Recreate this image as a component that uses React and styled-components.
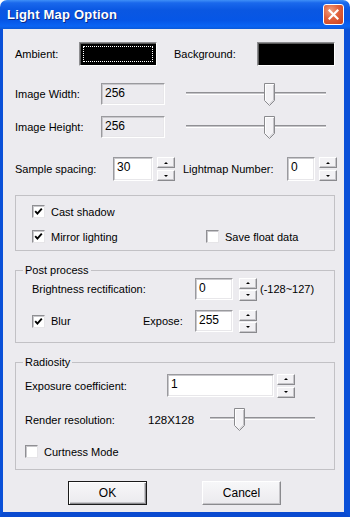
import React from 'react';
import styled, { createGlobalStyle } from 'styled-components';

const GlobalStyle = createGlobalStyle`
  html, body { margin: 0; padding: 0; background: #ffffff; }
  body { font-family: "Liberation Sans", Arial, sans-serif; }
`;

const Window = styled.div`
  width: 350px;
  height: 517px;
  display: flex;
  flex-direction: column;
  font-family: "Liberation Sans", Arial, sans-serif;
  font-size: 11px;
  color: #000;
`;

const TitleBar = styled.div`
  height: 29px;
  flex: none;
  display: flex;
  align-items: center;
  justify-content: space-between;
  padding: 0 6px 0 7px;
  border-radius: 7px 7px 0 0;
  background: linear-gradient(to bottom, #3f8ff7 0%, #1a68ec 10%, #0a57e2 35%, #0656e6 70%, #0a64f4 90%, #0b5ad9 100%);
`;

const Title = styled.div`
  color: #fff;
  font-weight: bold;
  font-size: 13px;
  letter-spacing: 0.2px;
  text-shadow: 1px 1px #0b2a86;
`;

const CloseButton = styled.div`
  width: 19px;
  height: 19px;
  border: 1px solid #fff;
  border-radius: 3px;
  display: flex;
  align-items: center;
  justify-content: center;
  background: radial-gradient(circle at 35% 30%, #f0a080 0%, #e0603c 45%, #c8401e 100%);
`;

const Client = styled.div`
  flex: 1;
  display: flex;
  flex-direction: column;
  padding: 13px 0 0 12px;
  background: #ecebef;
  border-left: 3px solid #0a50d8;
  border-right: 6px solid #0a50d8;
  border-bottom: 5px solid #0a4ad0;
`;

const Row = styled.div`
  display: flex;
  align-items: center;
  height: ${p => p.$h || 22}px;
  margin-top: ${p => p.$mt || 0}px;
`;

const Label = styled.div`
  width: ${p => p.$w}px;
  margin-left: ${p => p.$ml || 0}px;
  flex: none;
  white-space: nowrap;
`;

const ColorBox = styled.div`
  width: 78px;
  height: 24px;
  box-sizing: border-box;
  flex: none;
  background: #000;
  border: 1px solid;
  border-color: #8d8d90 #ffffff #ffffff #8d8d90;
  box-shadow: inset 1px 1px #5a5a5a;
  padding: 3px;
  display: flex;
`;

const FocusRect = styled.div`
  flex: 1;
  border: 1px dotted #ffffff;
`;

const TextBox = styled.div`
  width: ${p => p.$w}px;
  height: ${p => p.$h || 22}px;
  box-sizing: border-box;
  flex: none;
  padding: 2px 0 0 3px;
  background: ${p => (p.$readOnly ? '#ecebef' : '#ffffff')};
  border: 1px solid;
  border-color: #9a9a9e #ffffff #ffffff #9a9a9e;
  box-shadow: inset 1px 1px #c9c8cc, inset -1px -1px #e8e7ea;
  font-size: 12px;
  line-height: 14px;
`;

const SpinWrap = styled.div`
  display: flex;
  flex-direction: column;
  justify-content: space-between;
  width: 18px;
  height: ${p => p.$h || 24}px;
  margin-left: ${p => p.$ml || 4}px;
  flex: none;
`;

const SpinButton = styled.div`
  height: 11px;
  box-sizing: border-box;
  display: flex;
  align-items: center;
  justify-content: center;
  background: #f2f1f4;
  border: 1px solid;
  border-color: #ffffff #8a8a8e #8a8a8e #ffffff;
  box-shadow: inset -1px -1px #c6c5c9;
`;

const Arrow = styled.div`
  width: 0;
  height: 0;
  border-left: 2px solid transparent;
  border-right: 2px solid transparent;
  ${p => (p.$down ? 'border-top: 2px solid #000;' : 'border-bottom: 2px solid #000;')}
`;

const Slider = styled.div`
  position: relative;
  width: ${p => p.$w}px;
  height: ${p => p.$h || 23}px;
  margin-left: ${p => p.$ml || 0}px;
  flex: none;
  padding-top: 9px;
  box-sizing: border-box;
`;

const Groove = styled.div`
  height: 1px;
  background: #c4c3c7;
  border-top: 1px solid #909094;
  border-bottom: 1px solid #ffffff;
`;

const Thumb = styled.svg`
  position: absolute;
  top: 0;
  left: ${p => p.$pos}px;
`;

const Box = styled.div`
  width: 320px;
  box-sizing: border-box;
  margin-top: ${p => p.$mt || 0}px;
  border: 1px solid #c2c1c5;
  padding: ${p => p.$pad};
  display: flex;
  flex-direction: column;
`;

const Group = styled.fieldset`
  width: 320px;
  box-sizing: border-box;
  margin: ${p => p.$mt || 0}px 0 0 0;
  min-inline-size: 0;
  border: 1px solid #c2c1c5;
  padding: 0;
`;

const Legend = styled.legend`
  padding: 0 2px;
  margin-left: 7px;
  line-height: 13px;
  font-size: 11px;
`;

const GroupBody = styled.div`
  display: flex;
  flex-direction: column;
  padding: ${p => p.$pad};
`;

const CheckItem = styled.div`
  display: flex;
  align-items: center;
  width: ${p => (p.$w ? `${p.$w}px` : 'auto')};
  flex: none;
  gap: 6px;
`;

const CheckSquare = styled.div`
  width: 13px;
  height: 13px;
  box-sizing: border-box;
  flex: none;
  background: #fff;
  border: 1px solid;
  border-color: #8f8f93 #e6e5e8 #e6e5e8 #8f8f93;
  box-shadow: inset 1px 1px #c8c7cb;
  display: flex;
  align-items: center;
  justify-content: center;
`;

const Note = styled.div`
  margin-left: 3px;
  white-space: nowrap;
`;

const Value = styled.div`
  width: ${p => p.$w}px;
  flex: none;
  font-size: 11.5px;
`;

const ButtonBar = styled.div`
  display: flex;
  gap: 55px;
  margin: 11px 0 0 53px;
`;

const PushButton = styled.div`
  width: 79px;
  height: 24px;
  box-sizing: border-box;
  display: flex;
  align-items: center;
  justify-content: center;
  background: linear-gradient(to bottom, #f7f7f9, #ebeaee);
  border: 1px solid;
  border-color: ${p => (p.$default ? '#1a1a1a' : '#ffffff #8a8a8e #8a8a8e #ffffff')};
  box-shadow: ${p =>
    p.$default
      ? 'inset 1px 1px #ffffff, inset -1px -1px #8a8a8e, inset -2px -2px #c6c5c9'
      : 'inset -1px -1px #c6c5c9'};
  font-size: 12px;
`;

const Check = ({ checked, label, w }) => (
  <CheckItem $w={w}>
    <CheckSquare>
      {checked && (
        <svg width="9" height="9" viewBox="0 0 9 9">
          <polyline points="1.2,4.2 3.4,6.6 7.8,1.6" fill="none" stroke="#000" strokeWidth="1.9" />
        </svg>
      )}
    </CheckSquare>
    <span>{label}</span>
  </CheckItem>
);

const Spin = ({ h, ml }) => (
  <SpinWrap $h={h} $ml={ml}>
    <SpinButton><Arrow /></SpinButton>
    <SpinButton><Arrow $down /></SpinButton>
  </SpinWrap>
);

const TrackBar = ({ w, pos, ml, h }) => (
  <Slider $w={w} $ml={ml} $h={h}>
    <Groove />
    <Thumb $pos={pos} width="11" height="23" viewBox="0 0 11 23">
      <path d="M0.5 0.5 H10.5 V17.5 L5.5 22.5 L0.5 17.5 Z" fill="#f3f2f5" stroke="#8a8a8e" />
      <path d="M1.5 17.5 V1.5 H9.5" fill="none" stroke="#ffffff" />
      <path d="M9.5 2 V17 L5.5 21" fill="none" stroke="#c4c3c7" />
    </Thumb>
  </Slider>
);

const App = () => (
  <Window>
    <GlobalStyle />
    <TitleBar>
      <Title>Light Map Option</Title>
      <CloseButton>
        <svg width="11" height="11" viewBox="0 0 11 11">
          <path d="M1.5 1.5 L9.5 9.5 M9.5 1.5 L1.5 9.5" stroke="#fff" strokeWidth="2.2" strokeLinecap="square" />
        </svg>
      </CloseButton>
    </TitleBar>
    <Client>
      <Row $h={24}>
        <Label $w={64}>Ambient:</Label>
        <ColorBox><FocusRect /></ColorBox>
        <Label $w={83} $ml={17}>Background:</Label>
        <ColorBox />
      </Row>

      <Row $mt={17}>
        <Label $w={86}>Image Width:</Label>
        <TextBox $w={64} $readOnly>256</TextBox>
        <TrackBar w={140} pos={78} ml={21} />
      </Row>

      <Row $mt={11}>
        <Label $w={86}>Image Height:</Label>
        <TextBox $w={64} $readOnly>256</TextBox>
        <TrackBar w={140} pos={78} ml={21} />
      </Row>

      <Row $mt={19} $h={24}>
        <Label $w={98}>Sample spacing:</Label>
        <TextBox $w={40} $h={24}>30</TextBox>
        <Spin />
        <Label $w={104} $ml={8}>Lightmap Number:</Label>
        <TextBox $w={28} $h={24}>0</TextBox>
        <Spin />
      </Row>

      <Box $mt={14} $pad="9px 0 7px 16px">
        <Row $h={13}>
          <Check checked label="Cast shadow" />
        </Row>
        <Row $h={13} $mt={12}>
          <Check checked label="Mirror lighting" w={174} />
          <Check label="Save float data" />
        </Row>
      </Box>

      <Group $mt={13}>
        <Legend>Post process</Legend>
        <GroupBody $pad="1px 0 10px 16px">
          <Row>
            <Label $w={163}>Brightness rectification:</Label>
            <TextBox $w={38}>0</TextBox>
            <Spin h={23} ml={6} />
            <Note>(-128~127)</Note>
          </Row>
          <Row $mt={10}>
            <Check checked label="Blur" w={111} />
            <Label $w={52}>Expose:</Label>
            <TextBox $w={38}>255</TextBox>
            <Spin h={23} ml={6} />
          </Row>
        </GroupBody>
      </Group>

      <Group $mt={13}>
        <Legend>Radiosity</Legend>
        <GroupBody $pad="5px 0 11px 9px">
          <Row $h={23}>
            <Label $w={142}>Exposure coefficient:</Label>
            <TextBox $w={107} $h={23}>1</TextBox>
            <Spin h={24} ml={3} />
          </Row>
          <Row $h={24} $mt={11}>
            <Label $w={123}>Render resolution:</Label>
            <Value $w={62}>128X128</Value>
            <TrackBar w={105} pos={24} h={24} />
          </Row>
          <Row $h={13} $mt={13}>
            <Check label="Curtness Mode" />
          </Row>
        </GroupBody>
      </Group>

      <ButtonBar>
        <PushButton $default>OK</PushButton>
        <PushButton>Cancel</PushButton>
      </ButtonBar>
    </Client>
  </Window>
);

export default App;
